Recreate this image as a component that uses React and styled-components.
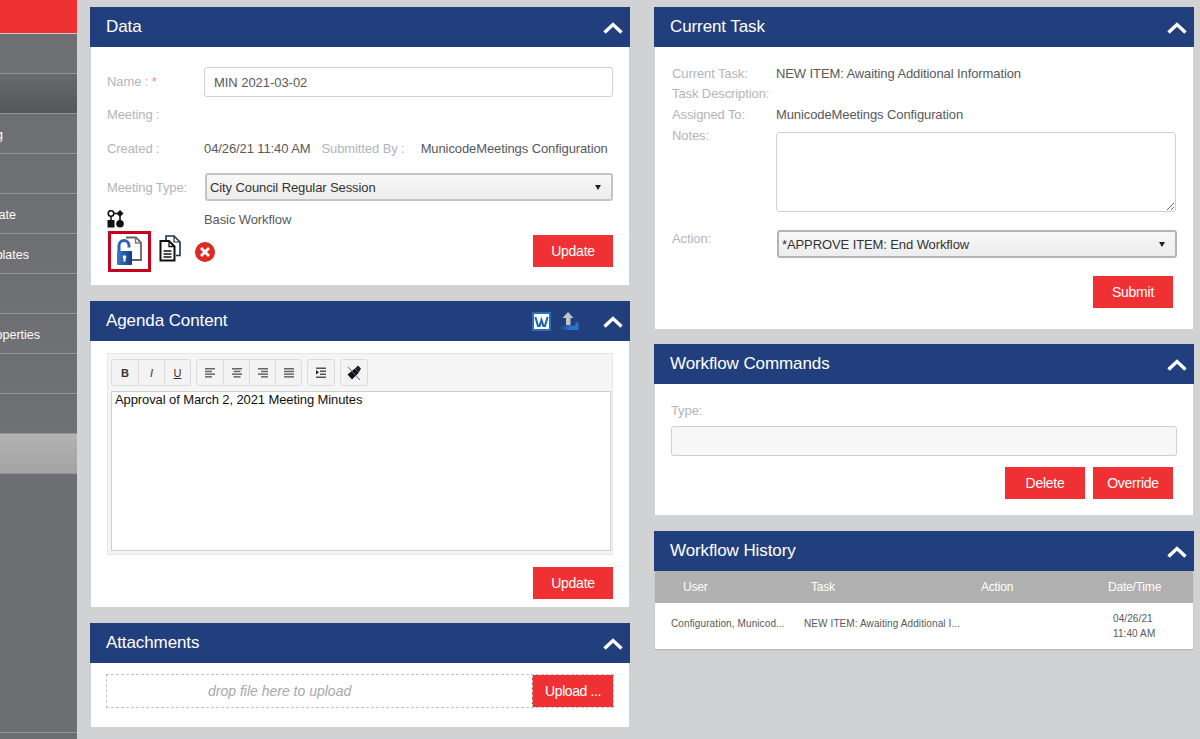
import React from 'react';
import styled, { createGlobalStyle } from 'styled-components';

const Global = createGlobalStyle`
  html, body { margin: 0; padding: 0; height: 100%; }
  body { background: #d1d2d4; font-family: "Liberation Sans", Arial, sans-serif; font-size: 13px; color: #58595b; overflow: hidden; }
  * { box-sizing: border-box; }
`;

const Page = styled.div`display: flex; width: 1200px; height: 739px; overflow: hidden;`;
const Sidebar = styled.nav`width: 77px; flex: none; height: 739px; background: #6d6e71; display: flex; flex-direction: column;`;
const Brand = styled.div`height: 34px; background: #f03134; border-bottom: 1px solid #c9c9c9;`;
const NavItem = styled.div`
  height: 40px; display: flex; align-items: center; justify-content: flex-end; overflow: hidden; white-space: nowrap;
  padding: 3px ${p => p.$end}px 0 0; color: #fff; font-size: 12.5px; border-bottom: 1px solid #939496;
  background: ${p => p.$state === 'selected' ? 'linear-gradient(#696a6c, #555658)' : p.$state === 'active' ? 'linear-gradient(#b3b3b3, #a3a3a3)' : 'linear-gradient(#6d6e71, #707174)'};
`;
const SideFill = styled.div`flex: 1; border-bottom: 1px solid #939496; margin-bottom: 6px;`;

const Column = styled.div`width: 540px; flex: none; margin-left: ${p => p.$left}px; padding-top: 7px; display: flex; flex-direction: column;`;
const Panel = styled.section`margin-bottom: ${p => p.$gap ?? 16}px;`;
const Head = styled.header`height: 40px; background: #213f7d; color: #fff; display: flex; align-items: center; padding: 0 7px 0 16px;`;
const Title = styled.h2`margin: 0; font-size: 17px; font-weight: 400; flex: 1; letter-spacing: -0.1px;`;
const Body = styled.div`margin: 0 1px; background: #fff; height: ${p => p.$h}px; padding: ${p => p.$pad || '0'}; ${p => p.$shadow && 'box-shadow: 0 1px 1px #b5b5b5;'}`;

const ChevronSvg = styled.svg`margin-top: 2px; flex: none;`;
const Chevron = () => (
  <ChevronSvg width="20" height="12" viewBox="0 0 20 12"><path d="M1.5 10.5 L10 2.5 L18.5 10.5" fill="none" stroke="#fff" strokeWidth="3.4" /></ChevronSvg>
);

const Label = styled.span`color: #b3b5b8; font-size: 13px; letter-spacing: -0.1px; white-space: nowrap; margin-left: ${p => p.$left || 0}px; margin-top: ${p => p.$lift || 0}px;`;
const Required = styled.span`color: #f08a8a;`;
const BlockLabel = styled(Label)`display: block; line-height: 17px;`;
const Value = styled.span`color: #58595b; font-size: 13px; letter-spacing: -0.1px; white-space: nowrap; margin-left: ${p => p.$left || 0}px;`;
const FormRow = styled.div`display: flex; align-items: center; height: ${p => p.$h}px; margin-top: ${p => p.$top || 0}px;`;
const LabelCol = styled.div`width: ${p => p.$w}px; flex: none; display: flex;`;
const TextInput = styled.input`
  width: 409px; height: 30px; border: 1px solid #ccd0d7; border-radius: 3px; padding: 0 9px; background: #fff;
  font: 13px "Liberation Sans", Arial, sans-serif; letter-spacing: -0.05px; color: #58595b; outline: none;
`;
const SelectWrap = styled.div`
  position: relative; width: ${p => p.$w}px; height: 28px; margin: 0 0 1px ${p => p.$left || 0}px;
  &::after { content: ''; position: absolute; right: 12px; top: 12px; border: 3.5px solid transparent; border-top: 5px solid #222; border-bottom: 0; pointer-events: none; }
`;
const Select = styled.select`
  appearance: none; width: 100%; height: 100%; border: 2px solid ${p => p.$edge || '#c4c4c4'}; border-radius: 3px; padding: 0 3px;
  background: linear-gradient(#f8f8f8, #ededed); font: 13px "Liberation Sans", Arial, sans-serif; letter-spacing: -0.1px; color: #333; outline: none;
`;
const IconRow = styled.div`display: flex; align-items: flex-start; height: 41px; margin-top: 3px;`;
const LockFrame = styled.div`width: 43px; height: 41px; margin-left: 1px; border: 3px solid #c8001f; display: flex; flex: none;`;
const CopyBtn = styled.div`margin: 4px 0 0 8px; width: 22px; height: 27px; display: flex;`;
const DeleteBtn = styled.div`margin: 11px 0 0 14px; width: 21px; height: 21px; display: flex;`;
const Spacer = styled.div`flex: 1;`;
const Button = styled.div`
  width: 80px; height: 32px; flex: none; background: #f03134; color: #fff; display: flex; align-items: center; justify-content: center;
  font-size: 14px; letter-spacing: -0.25px; margin-top: ${p => p.$top || 0}px;
`;
const ButtonRow = styled.div`display: flex; justify-content: flex-end; gap: 8px; margin-top: ${p => p.$top}px; margin-right: ${p => p.$right || 0}px;`;

const HeadIcons = styled.div`display: flex; align-items: center; gap: 9px; margin-right: 23px;`;

const Editor = styled.div`height: 202px; background: #f5f5f5; border: 1px solid #e6e6e6; padding: 5px 1px 3px 3px; display: flex; flex-direction: column;`;
const Toolbar = styled.div`display: flex; gap: 5px; height: 27px;`;
const ToolGroup = styled.div`display: flex; border: 1px solid #dcdcdc; border-radius: 3px; background: #f3f3f3;`;
const ToolBtn = styled.div`
  width: 26px; display: flex; align-items: center; justify-content: center; font-size: 11px; color: #333; font-weight: ${p => p.$b ? 700 : 400};
  font-style: ${p => p.$i ? 'italic' : 'normal'}; text-decoration: ${p => p.$u ? 'underline' : 'none'};
  & + & { border-left: 1px solid #dcdcdc; }
`;
const EditArea = styled.div`margin-top: 5px; height: 160px; background: #fff; border: 1px solid #cfcfcf; padding: 0 3px; color: #111; font-size: 13px; letter-spacing: -0.1px; line-height: 15px;`;

const Drop = styled.div`height: 34px; border: 1px dashed #c4c4c4; display: flex; align-items: stretch;`;
const DropText = styled.div`flex: 1; display: flex; align-items: center; padding-left: 101px; color: #a6a8ab; font-style: italic; font-size: 14px;`;
const UploadBtn = styled(Button)`width: 81px; height: 32px; border-left: 1px dashed #c4c4c4; letter-spacing: -0.4px;`;

const TaskRow = styled.div`display: flex; align-items: flex-start; height: ${p => p.$h}px;`;
const Notes = styled.textarea`
  display: block; width: 400px; height: 80px; border: 1px solid #ccd0d7; border-radius: 3px; outline: none; background: #fff; margin: 4px 0 0;
`;
const Disabled = styled.div`height: 30px; margin-top: 7px; background: #f7f7f7; border: 1px solid #ccd0d7; border-radius: 3px;`;

const TableHead = styled.div`height: 32px; background: #b0b0b0; display: grid; grid-template-columns: 156px 170px 127px 1fr; align-items: center; color: #fff; font-size: 12px; letter-spacing: -0.2px;`;
const HeadCell = styled.div`padding-left: ${p => p.$pad}px;`;
const TableRow = styled.div`height: 46px; display: grid; grid-template-columns: 149px 309px 1fr; align-items: center; font-size: 10px; color: #58595b; white-space: nowrap;`;
const Cell = styled.div`padding: 0 0 ${p => p.$lift || 0}px ${p => p.$pad}px; line-height: 15px; letter-spacing: 0.1px;`;

const LockIcon = () => (
  <svg width="37" height="35" viewBox="0 0 37 35">
    <defs><linearGradient id="lk" x1="0" x2="1"><stop offset="0" stopColor="#3a7bd0" /><stop offset="1" stopColor="#143a80" /></linearGradient></defs>
    <path d="M15 3.5 H25 L30 8.5 V26 H21" fill="none" stroke="#636466" strokeWidth="1.8" />
    <path d="M24.5 3.5 V9 H30" fill="none" stroke="#77787a" strokeWidth="1.4" />
    <path d="M8 17.5 V11.5 A5 5 0 0 1 18 11.5 V13.5" fill="none" stroke="#2b62b4" strokeWidth="3" />
    <rect x="6" y="17" width="15" height="14" rx="1" fill="url(#lk)" />
    <circle cx="13.5" cy="23" r="1.8" fill="#fff" />
    <rect x="12.5" y="23.5" width="2" height="4" fill="#fff" />
  </svg>
);
const CopyIcon = () => (
  <svg width="22" height="27" viewBox="0 0 22 27">
    <path d="M7 5 V1 H15 L21 7 V20.5 H17" fill="none" stroke="#1b3050" strokeWidth="1.6" />
    <path d="M15 1 V7 H21" fill="none" stroke="#1b3050" strokeWidth="1.2" />
    <path d="M1.5 6 H10 L15.5 11.5 V25.5 H1.5 Z" fill="#fff" stroke="#111" strokeWidth="2" />
    <path d="M10 6 V11.5 H15.5" fill="none" stroke="#111" strokeWidth="1.3" />
    <path d="M4.5 16 H12.5 M4.5 19 H12.5 M4.5 22 H12.5" stroke="#111" strokeWidth="1.4" />
  </svg>
);
const RemoveIcon = () => (
  <svg width="21" height="21" viewBox="0 0 21 21">
    <circle cx="10" cy="10" r="10" fill="#de2a25" />
    <path d="M6 6 L14 14 M14 6 L6 14" stroke="#fff" strokeWidth="2.8" />
  </svg>
);
const FlowIcon = () => (
  <svg width="18" height="18" viewBox="0 0 18 18">
    <circle cx="4" cy="3.5" r="2.8" fill="#fff" stroke="#111" strokeWidth="1.6" />
    <path d="M4 6 V11 M7 3.5 H12" stroke="#111" strokeWidth="1.5" fill="none" />
    <rect x="0.5" y="10" width="7" height="7.5" fill="#111" />
    <path d="M13 0 L16.5 3.5 L13 7 L9.5 3.5 Z" fill="#111" />
    <path d="M13 6 V12" stroke="#111" strokeWidth="1.6" />
    <circle cx="13" cy="13.8" r="3.8" fill="#111" />
  </svg>
);
const WordIcon = () => (
  <svg width="19" height="19" viewBox="0 0 19 19">
    <rect width="19" height="19" fill="#2b6fb8" />
    <rect x="2" y="2" width="15" height="15" fill="#fff" />
    <path d="M3.4 5 L6 14 H7.6 L9.5 8 L11.4 14 H13 L15.6 5" fill="none" stroke="#2068b0" strokeWidth="2.1" />
  </svg>
);
const UploadIcon = () => (
  <svg width="20" height="20" viewBox="0 0 20 20">
    <defs><linearGradient id="tray" x1="0" x2="1"><stop offset="0" stopColor="#213f7d" /><stop offset="0.5" stopColor="#2a74c9" /><stop offset="1" stopColor="#2a74c9" /></linearGradient></defs>
    <path d="M8 1 L13.5 7 H10.5 V14 H6 V7 H2.5 Z" fill="#c3c4c6" />
    <path d="M0 14.5 H15.5 V11.5 H18.5 V19 H0 Z" fill="url(#tray)" />
  </svg>
);
const AlignIcon = ({ kind }) => {
  const lines = {
    left: [[2, 10], [2, 7], [2, 10], [2, 7]],
    center: [[2, 10], [3.5, 7], [2, 10], [3.5, 7]],
    right: [[2, 10], [5, 7], [2, 10], [5, 7]],
    full: [[2, 10], [2, 10], [2, 10], [2, 10]],
  }[kind];
  return (
    <svg width="14" height="12" viewBox="0 0 14 12">
      {lines.map(([x, w], i) => <rect key={i} x={x} y={1 + i * 2.7} width={w} height="1.5" fill="#666" />)}
    </svg>
  );
};
const IndentIcon = () => (
  <svg width="14" height="12" viewBox="0 0 14 12">
    <rect x="2" y="0.5" width="10" height="1.5" fill="#555" /><rect x="6" y="3.5" width="6" height="1.5" fill="#555" />
    <rect x="6" y="6.5" width="6" height="1.5" fill="#555" /><rect x="2" y="9.5" width="10" height="1.5" fill="#555" />
    <path d="M2 3 L5 5.3 L2 7.5 Z" fill="#222" />
  </svg>
);
const EraseIcon = () => (
  <svg width="16" height="16" viewBox="0 0 16 16">
    <path d="M1.5 9.5 L9 3.5 L12.5 8 L6 14.5 Z" fill="#111" />
    <path d="M9 3.5 L12 0.5 L15 3.5 L12.5 8 Z" fill="#222" />
    <path d="M2 2 L14 15" stroke="#3c6fb4" strokeWidth="1" />
  </svg>
);

const nav = [
  { end: 77 }, { end: 77, state: 'selected' }, { end: 74, text: 'Meeting' }, { end: 77 }, { end: 61, text: 'Template' },
  { end: 48, text: 'Agenda Templates' }, { end: 77 }, { end: 37, text: 'Meeting Properties' }, { end: 77 }, { end: 77 }, { end: 77, state: 'active' },
];

export default function App() {
  return (
    <Page>
      <Global />
      <Sidebar>
        <Brand />
        {nav.map((n, i) => <NavItem key={i} $end={n.end} $state={n.state}>{n.text}</NavItem>)}
        <SideFill />
      </Sidebar>

      <Column $left={13}>
        <Panel>
          <Head><Title>Data</Title><Chevron /></Head>
          <Body $h={238} $pad="20px 16px 0 16px">
            <FormRow $h={30}>
              <LabelCol $w={97}><Label $lift={-2}>Name : <Required>*</Required></Label></LabelCol>
              <TextInput readOnly value="MIN 2021-03-02" />
            </FormRow>
            <FormRow $h={20} $top={7}><Label>Meeting :</Label></FormRow>
            <FormRow $h={20} $top={14}>
              <LabelCol $w={97}><Label>Created :</Label></LabelCol>
              <Value>04/26/21 11:40 AM</Value>
              <Label $left={11}>Submitted By :</Label>
              <Value $left={16}>MunicodeMeetings Configuration</Value>
            </FormRow>
            <FormRow $h={29} $top={15}>
              <LabelCol $w={97}><Label>Meeting Type:</Label></LabelCol>
              <SelectWrap $w={409} $left={1}>
                <Select defaultValue="c"><option value="c">City Council Regular Session</option></Select>
              </SelectWrap>
            </FormRow>
            <FormRow $h={18} $top={8}>
              <LabelCol $w={97}><FlowIcon /></LabelCol>
              <Value>Basic Workflow</Value>
            </FormRow>
            <IconRow>
              <LockFrame><LockIcon /></LockFrame>
              <CopyBtn><CopyIcon /></CopyBtn>
              <DeleteBtn><RemoveIcon /></DeleteBtn>
              <Spacer />
              <Button $top={4}>Update</Button>
            </IconRow>
          </Body>
        </Panel>

        <Panel>
          <Head>
            <Title>Agenda Content</Title>
            <HeadIcons><WordIcon /><UploadIcon /></HeadIcons>
            <Chevron />
          </Head>
          <Body $h={266} $pad="12px 16px 0 16px">
            <Editor>
              <Toolbar>
                <ToolGroup><ToolBtn $b>B</ToolBtn><ToolBtn $i>I</ToolBtn><ToolBtn $u>U</ToolBtn></ToolGroup>
                <ToolGroup>
                  <ToolBtn><AlignIcon kind="left" /></ToolBtn><ToolBtn><AlignIcon kind="center" /></ToolBtn>
                  <ToolBtn><AlignIcon kind="right" /></ToolBtn><ToolBtn><AlignIcon kind="full" /></ToolBtn>
                </ToolGroup>
                <ToolGroup><ToolBtn><IndentIcon /></ToolBtn></ToolGroup>
                <ToolGroup><ToolBtn><EraseIcon /></ToolBtn></ToolGroup>
              </Toolbar>
              <EditArea>Approval of March 2, 2021 Meeting Minutes</EditArea>
            </Editor>
            <ButtonRow $top={12}><Button>Update</Button></ButtonRow>
          </Body>
        </Panel>

        <Panel>
          <Head><Title>Attachments</Title><Chevron /></Head>
          <Body $h={64} $pad="11px 15px 0 15px">
            <Drop><DropText>drop file here to upload</DropText><UploadBtn>Upload ...</UploadBtn></Drop>
          </Body>
        </Panel>
      </Column>

      <Column $left={24}>
        <Panel $gap={15}>
          <Head><Title>Current Task</Title><Chevron /></Head>
          <Body $h={282} $pad="19px 16px 0 17px">
            <TaskRow $h={20}><LabelCol $w={104}><Label>Current Task:</Label></LabelCol><Value>NEW ITEM: Awaiting Additional Information</Value></TaskRow>
            <TaskRow $h={21}><LabelCol $w={104}><Label>Task Description:</Label></LabelCol></TaskRow>
            <TaskRow $h={21}><LabelCol $w={104}><Label>Assigned To:</Label></LabelCol><Value>MunicodeMeetings Configuration</Value></TaskRow>
            <TaskRow $h={102}><LabelCol $w={104}><Label>Notes:</Label></LabelCol><Notes /></TaskRow>
            <FormRow $h={29}>
              <LabelCol $w={105}><Label $lift={-13}>Action:</Label></LabelCol>
              <SelectWrap $w={401}>
                <Select defaultValue="a" $edge="#b4b4b4"><option value="a">*APPROVE ITEM: End Workflow</option></Select>
              </SelectWrap>
            </FormRow>
            <ButtonRow $top={17} $right={4}><Button>Submit</Button></ButtonRow>
          </Body>
        </Panel>

        <Panel>
          <Head><Title>Workflow Commands</Title><Chevron /></Head>
          <Body $h={131} $pad="18px 16px 0 16px">
            <BlockLabel>Type:</BlockLabel>
            <Disabled />
            <ButtonRow $top={11} $right={4}><Button>Delete</Button><Button>Override</Button></ButtonRow>
          </Body>
        </Panel>

        <Panel>
          <Head><Title>Workflow History</Title><Chevron /></Head>
          <Body $h={78} $shadow>
            <TableHead>
              <HeadCell $pad={28}>User</HeadCell>
              <HeadCell $pad={0}>Task</HeadCell>
              <HeadCell $pad={0}>Action</HeadCell>
              <HeadCell $pad={0}>Date/Time</HeadCell>
            </TableHead>
            <TableRow>
              <Cell $pad={16} $lift={6}>Configuration, Municod...</Cell>
              <Cell $pad={0} $lift={6}>NEW ITEM: Awaiting Additional I...</Cell>
              <Cell $pad={0}>04/26/21<br />11:40 AM</Cell>
            </TableRow>
          </Body>
        </Panel>
      </Column>
    </Page>
  );
}
